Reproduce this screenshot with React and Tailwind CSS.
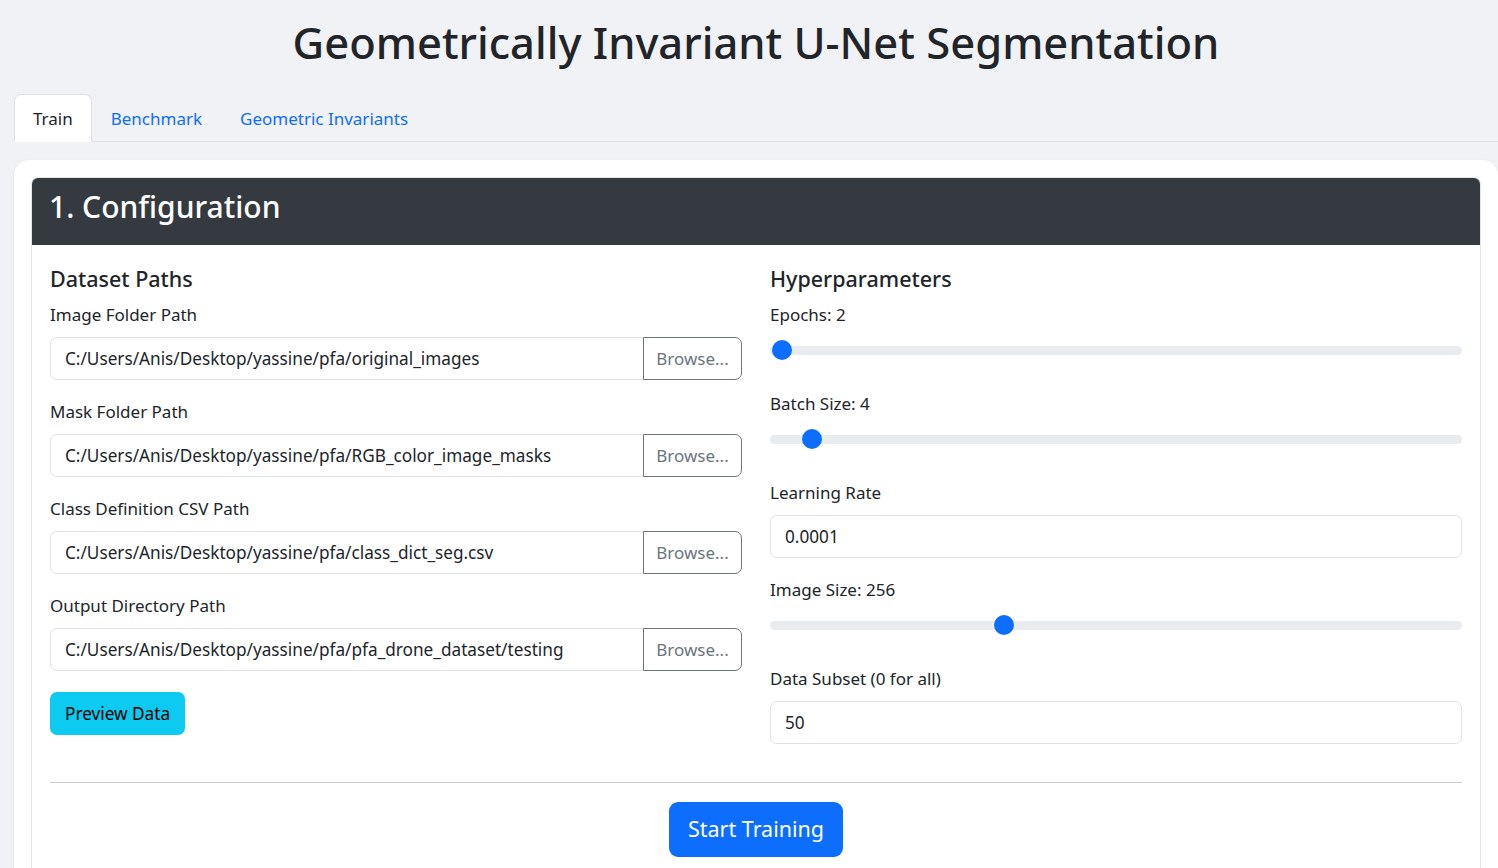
import React from "react";

const paths = [
  { label: "Image Folder Path", value: "C:/Users/Anis/Desktop/yassine/pfa/original_images" },
  { label: "Mask Folder Path", value: "C:/Users/Anis/Desktop/yassine/pfa/RGB_color_image_masks" },
  { label: "Class Definition CSV Path", value: "C:/Users/Anis/Desktop/yassine/pfa/class_dict_seg.csv" },
  { label: "Output Directory Path", value: "C:/Users/Anis/Desktop/yassine/pfa/pfa_drone_dataset/testing" },
];

function Range({ value, min, max }) {
  const pct = (value - min) / (max - min);
  return (
    <div className="relative h-[26px] mb-[27px] flex items-center">
      <div className="w-full h-[9px] rounded-full bg-[#e9ecef]" />
      <div
        className="absolute top-[3px] w-[20px] h-[20px] rounded-full bg-[#0d6efd]"
        style={{ left: `calc(${pct} * (100% - 20px))` }}
      />
    </div>
  );
}

function Label({ children }) {
  return <div className="text-[17px] leading-[27px] mb-[9px] text-[#212529]">{children}</div>;
}

function TextInput({ value }) {
  return (
    <div className="h-[43px] mb-[18px] border border-[#dee2e6] rounded-[7px] px-[14px] flex items-center text-[17.2px] text-[#212529] bg-white">
      {value}
    </div>
  );
}

export default function App() {
  return (
    <div className="min-h-screen bg-[#f0f2f5] pl-[14px] text-[#212529] overflow-hidden" style={{ fontFamily: '"Noto Sans", "Open Sans", sans-serif' }}>
      {/* Title */}
      <h1 className="pt-[15px] h-[69px] mb-[25px] text-center text-[43.5px] leading-[54px] font-medium text-[#212529]">
        Geometrically Invariant U-Net Segmentation
      </h1>

      {/* Tabs */}
      <div className="flex border-b border-[#dee2e6] text-[17px] leading-[27px]">
        <div className="px-[18px] pt-[10px] pb-[8px] bg-white border border-[#dee2e6] border-b-white rounded-t-[7px] -mb-px text-[#212529]">Train</div>
        <div className="px-[18px] pt-[10px] pb-[8px] border border-transparent text-[#0d6efd]">Benchmark</div>
        <div className="px-[18px] pt-[10px] pb-[8px] border border-transparent text-[#0d6efd]">Geometric Invariants</div>
      </div>

      {/* Main card */}
      <div className="mt-[18px] bg-white rounded-[15px] p-[17px] shadow-sm">
        <div className="border border-[#e5e7eb] rounded-[7px] overflow-hidden">
          <div className="h-[67px] bg-[#343a40] flex items-center px-[17px] pb-[10px]">
            <h2 className="text-white text-[30px] font-medium leading-[38px]">1. Configuration</h2>
          </div>

          <div className="px-[18px] pt-[20px] pb-[18px]">
            <div className="grid grid-cols-2 gap-x-[28px] mb-[20px]">
              {/* Left column */}
              <div>
                <h5 className="text-[21.5px] leading-[27px] font-medium mb-[9px]">Dataset Paths</h5>
                {paths.map((p) => (
                  <div key={p.label}>
                    <Label>{p.label}</Label>
                    <div className="flex h-[43px] mb-[18px]">
                      <div className="flex-1 border border-[#dee2e6] rounded-l-[7px] px-[14px] flex items-center text-[17.2px] whitespace-nowrap">
                        {p.value}
                      </div>
                      <div className="w-[99px] -ml-px border border-[#6c757d] rounded-r-[7px] flex items-center justify-center text-[17px] text-[#6c757d]">
                        Browse...
                      </div>
                    </div>
                  </div>
                ))}
                <div className="mt-[3px] inline-flex items-center h-[43px] px-[15px] rounded-[7px] bg-[#0dcaf0] text-[17.2px] text-black">
                  Preview Data
                </div>
              </div>

              {/* Right column */}
              <div>
                <h5 className="text-[21.5px] leading-[27px] font-medium mb-[9px]">Hyperparameters</h5>
                <Label>Epochs: 2</Label>
                <Range value={2} min={1} max={300} />
                <Label>Batch Size: 4</Label>
                <Range value={4} min={1} max={64} />
                <Label>Learning Rate</Label>
                <TextInput value="0.0001" />
                <Label>Image Size: 256</Label>
                <Range value={256} min={64} max={640} />
                <Label>Data Subset (0 for all)</Label>
                <TextInput value="50" />
              </div>
            </div>

            <div className="h-px bg-[#c8c9ca] mb-[19px]" />

            <div className="flex justify-center">
              <div className="h-[55px] px-[19px] flex items-center rounded-[9px] bg-[#0d6efd] text-white text-[21.5px]">
                Start Training
              </div>
            </div>
          </div>
        </div>
      </div>
    </div>
  );
}
